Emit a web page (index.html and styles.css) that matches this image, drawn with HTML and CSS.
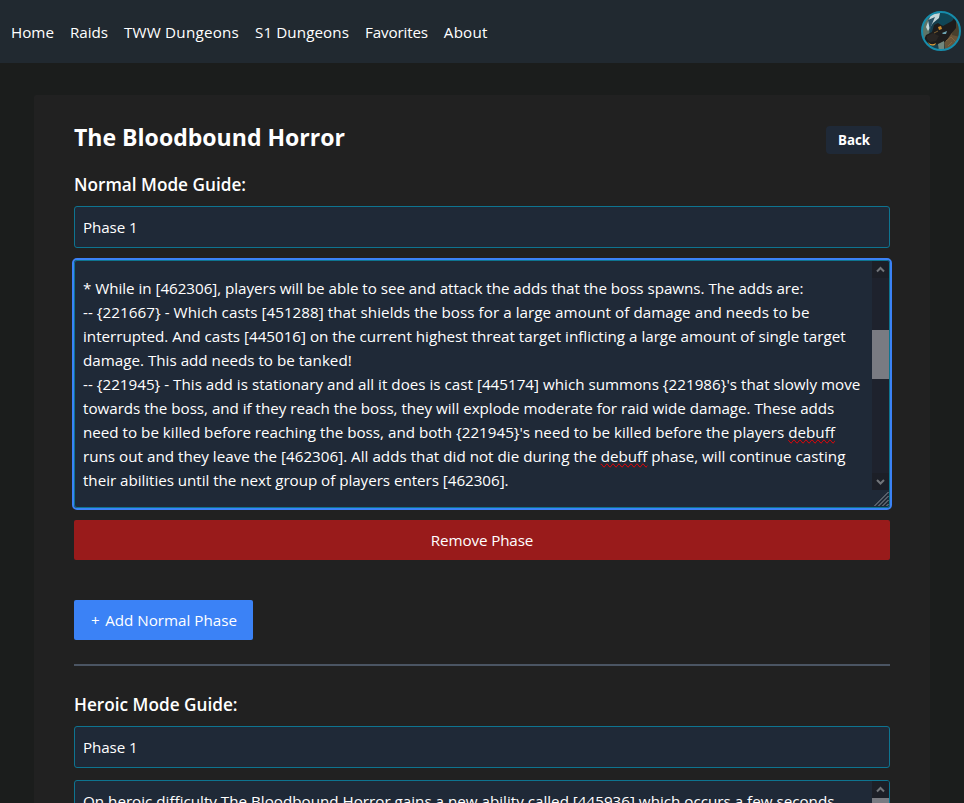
FILE: index.html
```
<!DOCTYPE html>
<html lang="en">
<head>
<meta charset="utf-8">
<title>The Bloodbound Horror</title>
<link rel="stylesheet" href="styles.css">
</head>
<body>
<header class="nav">
  <nav class="links">
    <a>Home</a><a class="raids">Raids</a><a class="tww">TWW Dungeons</a><a class="s1">S1 Dungeons</a><a class="fav">Favorites</a><a class="about">About</a>
  </nav>
  <svg class="avatar" viewBox="0 0 40 40">
    <defs><clipPath id="c"><circle cx="20" cy="20" r="19"/></clipPath></defs>
    <g clip-path="url(#c)">
      <rect width="40" height="40" fill="#173f4d"/>
      <path d="M0 12L8 7L9 40H0Z" fill="#5c7467"/>
      <path d="M10 3L19 2L18 7L12 12L7 20L5 16Z" fill="#c3d5d8"/>
      <path d="M7 9L14 6L11 13L9 20Z" fill="#285064"/>
      <path d="M19 1L30 3L34 10L22 17L14 16L19 8Z" fill="#104656"/>
      <path d="M24 40L23 28L29 20L40 15V40Z" fill="#685439"/>
      <path d="M33 8L38 12L39 26L31 24Z" fill="#49402d"/>
      <path d="M13 14L17 12L22 15L31 10L35 5L35 17L30 23L26 29L21 33L9 34L3 29L5 24L11 21Z" fill="#1d1c1c"/>
      <path d="M6 25L12 22L18 25L15 30L9 31L6 28Z" fill="#292624"/>
      <path d="M17 16L20 15L21 18L18 19Z" fill="#c98a2b"/>
      <path d="M21 22L26 20L25 23L22 23Z" fill="#6fa5b3"/>
      <path d="M13 22L17 20" stroke="#806031"/>
      <path d="M7 31Q10 35 15 32L14 34Q9 36 7 31Z" fill="#d79a38"/>
      <path d="M17 33L23 30V40H18Z" fill="#71877e"/>
      <path d="M25 30L30 26L36 32M27 35L31 31" fill="none" stroke="#806541"/>
    </g>
    <circle cx="20" cy="20" r="19" fill="none" stroke="#168cab" stroke-width="2"/>
  </svg>
</header>
<main class="card">
  <div class="head"><h1>The Bloodbound Horror</h1><button class="back">Back</button></div>
  <section>
    <h2>Normal Mode Guide:</h2>
    <div class="field">Phase 1</div>
    <div class="area focused">
      <div class="text">
        <p class="l1">* While in [462306], players will be able to see and attack the adds that the boss spawns. The adds are:</p>
        <p class="l2">-- {221667} - Which casts [451288] that shields the boss for a large amount of damage and needs to be</p>
        <p>interrupted. And casts [445016] on the current highest threat target inflicting a large amount of single target</p>
        <p>damage. This add needs to be tanked!</p>
        <p class="l5">-- {221945} - This add is stationary and all it does is cast [445174] which summons {221986}'s that slowly move</p>
        <p class="l6">towards the boss, and if they reach the boss, they will explode moderate for raid wide damage. These adds</p>
        <p>need to be killed before reaching the boss, and both {221945}'s need to be killed before the players <span class="sp">debuff</span></p>
        <p class="l8">runs out and they leave the [462306]. All adds that did not die during the <span class="sp">debuff</span> phase, will continue casting</p>
        <p class="l9">their abilities until the next group of players enters [462306].</p>
      </div>
      <div class="bar">
        <svg class="btn" viewBox="0 0 17 17"><path d="M5 10.5L8.5 7L12 10.5"/></svg>
        <div class="track"><div class="thumb"></div></div>
        <svg class="btn" viewBox="0 0 17 17"><path d="M5 7L8.5 10.5L12 7"/></svg>
        <svg class="grip" viewBox="0 0 17 17"><path d="M2.5 16L16.5 2M6.5 16L16.5 6M10.5 16L16.5 10M14.5 16L16.5 14"/></svg>
      </div>
    </div>
    <button class="remove">Remove Phase</button>
    <button class="add"><span class="plus">+</span> Add Normal Phase</button>
  </section>
  <hr>
  <section>
    <h2>Heroic Mode Guide:</h2>
    <div class="field">Phase 1</div>
    <div class="area">
      <div class="text"><p>On heroic difficulty The Bloodbound Horror gains a new ability called [445936] which occurs a few seconds</p></div>
      <div class="bar">
        <svg class="btn" viewBox="0 0 17 17"><path d="M5 10.5L8.5 7L12 10.5"/></svg>
        <div class="track top"><div class="thumb"></div></div>
      </div>
    </div>
  </section>
</main>
</body>
</html>
```
FILE: styles.css
```
* { box-sizing: border-box; margin: 0; padding: 0; }
html, body { height: 803px; overflow: hidden; }
body {
  background: #1b1d1c;
  color: #fff;
  font: 15.2px/24px "Open Sans", "Noto Sans", sans-serif;
}
.nav {
  height: 63px;
  background: #212930;
  display: flex;
  align-items: center;
  justify-content: space-between;
  padding: 0 3px 1px 11px;
}
.links { display: flex; gap: 16px; padding-top: 2px; white-space: nowrap; }
.raids { letter-spacing: -.05px; }
.tww { letter-spacing: .22px; }
.s1 { letter-spacing: .09px; }
.fav { letter-spacing: -.16px; }
.about { letter-spacing: .2px; }
.avatar { width: 40px; height: 40px; display: block; }
.card {
  margin: 32px 34px 0;
  height: 708px;
  overflow: hidden;
  padding: 27px 40px 0;
  background: #212121;
  border-radius: 2px 2px 0 0;
}
.head { display: flex; justify-content: space-between; height: 32px; padding-right: 8px; }
h1 { font-size: 23.05px; line-height: 30px; font-weight: 700; }
button { border: 0; color: #fff; font: inherit; display: block; }
.back {
  width: 56px;
  height: 28px;
  margin-top: 4px;
  border-radius: 4px;
  background: #1f2937;
  font-size: 13.3px;
  line-height: 28px;
  font-weight: 700;
}
h2 { font-size: 17.22px; line-height: 28px; font-weight: 600; padding-top: 17px; height: 52px; }
.field, .area { border: 1px solid #0e7490; border-radius: 3px; background: #1f2937; }
.field { height: 42px; padding: 8px; letter-spacing: -.1px; }
.area { height: 248px; margin-top: 12px; display: flex; justify-content: space-between; overflow: hidden; }
.focused { outline: 2px solid #3b82f6; }
.text { padding: 8px 0 0 8px; white-space: nowrap; }
.focused .text { padding-top: 15px; }
.l1 { letter-spacing: -.037px; }
.l2 { letter-spacing: .045px; }
.l5 { letter-spacing: .009px; }
.l6 { letter-spacing: -.03px; }
.l8 { letter-spacing: .012px; }
.l9 { letter-spacing: -.04px; }
.sp { text-decoration: spelling-error; }
.bar { width: 17px; flex: none; display: flex; flex-direction: column; }
.btn, .grip { width: 17px; height: 17px; flex: none; display: block; fill: none; }
.btn { background: #1c1f27; stroke: #72757a; stroke-width: 2; }
.grip { stroke: #92969d; stroke-width: 1; }
.track { flex: 1; background: #1e222d; padding-top: 52px; }
.track.top { padding-top: 0; }
.thumb { height: 49px; background: #797b82; }
.remove { width: 100%; height: 40px; margin-top: 12px; background: #991b1b; border-radius: 2px; letter-spacing: -.12px; }
.add { width: 179px; height: 40px; margin-top: 40px; padding-left: 1px; background: #3b82f6; border-radius: 2px; }
.plus { margin-right: 1.5px; }
hr { border: 0; height: 2px; background: #4b5563; margin-top: 24px; }
hr + section { padding-top: 8px; }
```
